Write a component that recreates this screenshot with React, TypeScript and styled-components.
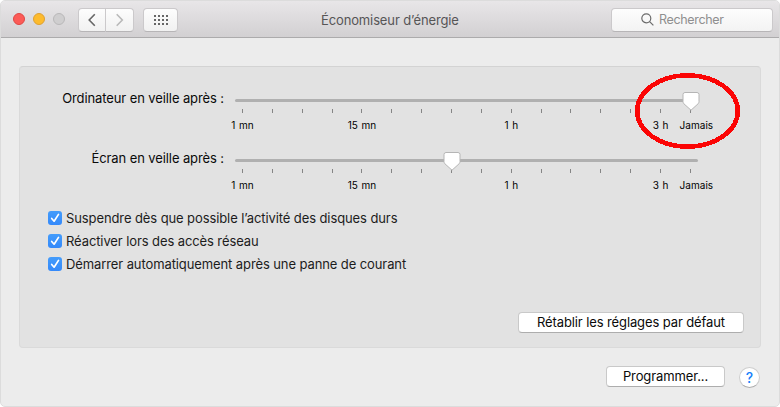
import React from "react";
import styled, { createGlobalStyle } from "styled-components";

const Global = createGlobalStyle`
  * { box-sizing: border-box; }
  body { margin: 0; background: #fff; font-family: Inter, "Liberation Sans", sans-serif; }
  button { font: inherit; padding: 0; margin: 0; }
`;

const Window = styled.div`
  position: relative;
  width: 780px;
  height: 407px;
  border: 1px solid #dcdcdc;
  border-radius: 5px;
  background: #ececec;
  overflow: hidden;
`;

const TitleBar = styled.header`
  height: 37px;
  display: flex;
  align-items: center;
  padding: 0 6px 0 12px;
  background: linear-gradient(#e8e6e8, #d2d0d2);
  border-bottom: 1px solid #acabac;
`;

const Lights = styled.div`
  display: flex;
  gap: 8px;
  width: 64px;
`;

const Light = styled.span<{ $fill: string; $edge: string }>`
  width: 12px;
  height: 12px;
  border-radius: 50%;
  background: ${(p) => p.$fill};
  border: 1px solid ${(p) => p.$edge};
`;

const ToolButton = styled.button<{ $width: number; $side?: "left" | "right" }>`
  width: ${(p) => p.$width}px;
  height: 24px;
  display: flex;
  align-items: center;
  justify-content: center;
  border: 1px solid #cbc9cb;
  border-bottom-color: #b7b5b7;
  border-left-width: ${(p) => (p.$side === "right" ? 0 : 1)}px;
  border-radius: ${(p) =>
    p.$side === "left" ? "4px 0 0 4px" : p.$side === "right" ? "0 4px 4px 0" : "4px"};
  background: linear-gradient(#fdfdfd, #f1f1f1);
`;

const NavGroup = styled.div`
  display: flex;
  margin: 1px 9px 0 1px;
`;

const GridSlot = styled.div`
  margin-top: 1px;
  width: 170px;
`;

const Title = styled.h1`
  margin: 2px 0 0;
  font-size: 13px;
  font-weight: 400;
  line-height: 18px;
  letter-spacing: -0.13px;
  color: #565556;
  white-space: nowrap;
  width: 290px;
  padding-left: 8px;
`;

const Search = styled.div`
  width: 162px;
  height: 24px;
  margin-top: 1px;
  margin-left: auto;
  display: flex;
  align-items: center;
  gap: 5px;
  padding-left: 29px;
  border: 1px solid #cbc9cb;
  border-bottom-color: #b7b5b7;
  border-radius: 4px;
  background: linear-gradient(#fdfdfd, #f3f3f3);
  color: #8f8f8f;
  font-size: 12.5px;
  letter-spacing: -0.33px;
`;

const Content = styled.main`
  padding: 28px 18px 0;
`;

const Panel = styled.section`
  height: 282px;
  border: 1px solid #dadada;
  border-top-color: #d3d3d3;
  border-radius: 4px;
  background: #e2e2e2;
  padding: 21px 16px 14px 27px;
  display: flex;
  flex-direction: column;
`;

const SliderRow = styled.div`
  display: flex;
  height: 60px;
`;

const SliderLabel = styled.div`
  width: 177px;
  text-align: right;
  font-size: 13px;
  line-height: 20px;
  letter-spacing: -0.1px;
  color: #0a0a0a;
  white-space: nowrap;
`;

const Slider = styled.div`
  position: relative;
  width: 463px;
  margin-left: 11px;
  padding-top: 11px;
`;

const Track = styled.div`
  height: 3px;
  border-radius: 2px;
  background: #b0b0b0;
`;

const Ticks = styled.div`
  display: flex;
  justify-content: space-between;
  width: 449px;
  margin: 7px 0 0 7px;
`;

const Tick = styled.div`
  width: 1px;
  display: flex;
  flex-direction: column;
  align-items: center;
  &::before {
    content: "";
    width: 1px;
    height: 4px;
    background: #858585;
  }
`;

const TickLabel = styled.span<{ $last: boolean }>`
  margin-top: 5px;
  padding-left: ${(p) => (p.$last ? 12 : 0)}px;
  font-size: 10px;
  line-height: 14px;
  letter-spacing: 0.03px;
  word-spacing: 0.8px;
  color: #000;
  white-space: nowrap;
`;

const Thumb = styled.svg<{ $step: number }>`
  position: absolute;
  top: 3px;
  left: ${(p) => (7.5 + (p.$step * 448) / 15 - 9).toFixed(2)}px;
`;

const Options = styled.div`
  display: flex;
  flex-direction: column;
  gap: 1px;
  margin: -1px 0 0 1px;
`;

const Option = styled.label`
  display: flex;
  align-items: center;
  gap: 4px;
  height: 22px;
  font-size: 13px;
  letter-spacing: -0.1px;
  color: #1c1c1c;
  white-space: nowrap;
`;

const Box = styled.span`
  width: 14px;
  height: 14px;
  border-radius: 3px;
  background: linear-gradient(#449cfb, #3489fa);
  display: flex;
`;

const PushButton = styled.button<{ $width: number }>`
  width: ${(p) => p.$width}px;
  height: 21px;
  border: 1px solid #c9c9c9;
  border-bottom-color: #adadad;
  border-radius: 4px;
  background: #fff;
  font-size: 13px;
  line-height: 18px;
  padding-bottom: 1px;
  letter-spacing: -0.11px;
  color: #0a0a0a;
  white-space: nowrap;
`;

const PanelFooter = styled.div`
  margin-top: auto;
  display: flex;
  justify-content: flex-end;
`;

const Footer = styled.footer`
  display: flex;
  justify-content: flex-end;
  gap: 14px;
  padding: 18px 1px 0 0;
`;

const Help = styled.button`
  width: 21px;
  height: 21px;
  margin-top: 1px;
  border-radius: 50%;
  border: 1px solid #cecece;
  border-bottom-color: #adadad;
  background: #fff;
  color: #1680fa;
  font-size: 14px;
  font-weight: 500;
  line-height: 19px;
`;

const Highlight = styled.svg`
  position: absolute;
  left: 633px;
  top: 70px;
`;

const LABELS: Record<number, string> = { 0: "1 mn", 4: "15 mn", 9: "1 h", 14: "3 h", 15: "Jamais" };
const STEPS = Array.from({ length: 16 }, (_, i) => i);
const OPTIONS = [
  "Suspendre dès que possible l’activité des disques durs",
  "Réactiver lors des accès réseau",
  "Démarrer automatiquement après une panne de courant",
];

function SleepSlider({ label, step }: { label: string; step: number }) {
  return (
    <SliderRow>
      <SliderLabel>{label}</SliderLabel>
      <Slider>
        <Track />
        <Ticks>
          {STEPS.map((i) => (
            <Tick key={i}>{LABELS[i] && <TickLabel $last={i === 15}>{LABELS[i]}</TickLabel>}</Tick>
          ))}
        </Ticks>
        <Thumb $step={step} width="18" height="21" viewBox="0 0 18 21">
          <path
            d="M3 1.500h12a2 2 0 0 1 2 2v7.200c0 .8-.3 1.400-.8 2L9 19.200l-7.200-6.500c-.5-.6-.8-1.200-.8-2V3.500a2 2 0 0 1 2-2z"
            fill="#fff"
            stroke="#b5b5b5"
          />
        </Thumb>
      </Slider>
    </SliderRow>
  );
}

export default function App() {
  return (
    <>
      <Global />
      <Window>
        <TitleBar>
          <Lights>
            <Light $fill="#fc5b57" $edge="#df4744" />
            <Light $fill="#fdbb2d" $edge="#dea032" />
            <Light $fill="#cfcecf" $edge="#b9b8b9" />
          </Lights>
          <NavGroup>
            <ToolButton $width={28} $side="left" aria-label="Précédent">
              <svg width="9" height="14" viewBox="0 0 9 14" fill="none" stroke="#666" strokeWidth="1.6">
                <path d="M6.800 1.300 1.200 7l5.600 5.700" />
              </svg>
            </ToolButton>
            <ToolButton $width={28} $side="right" aria-label="Suivant">
              <svg width="9" height="14" viewBox="0 0 9 14" fill="none" stroke="#b9b9b9" strokeWidth="1.6">
                <path d="M1.700 1.300 7.300 7l-5.600 5.700" />
              </svg>
            </ToolButton>
          </NavGroup>
          <GridSlot>
            <ToolButton $width={35} aria-label="Tout afficher">
              <svg width="14" height="10" viewBox="0 0 14 10" fill="#666" shapeRendering="crispEdges">
                {[0, 4, 8].map((y) =>
                  [0, 4, 8, 12].map((x) => <rect key={`${x}-${y}`} x={x} y={y} width="2" height="2" />)
                )}
              </svg>
            </ToolButton>
          </GridSlot>
          <Title>Économiseur d’énergie</Title>
          <Search>
            <svg width="13" height="13" viewBox="0 0 13 13" fill="none" stroke="#6c6c6c" strokeWidth="1.200">
              <circle cx="5.300" cy="5.300" r="4.500" />
              <path d="m8.600 8.600 3.800 3.800" />
            </svg>
            Rechercher
          </Search>
        </TitleBar>
        <Content>
          <Panel>
            <SleepSlider label="Ordinateur en veille après :" step={15} />
            <SleepSlider label="Écran en veille après :" step={7} />
            <Options>
              {OPTIONS.map((text) => (
                <Option key={text}>
                  <Box>
                    <svg width="14" height="14" viewBox="0 0 14 14" fill="none" stroke="#fff" strokeWidth="1.700" strokeLinecap="round" strokeLinejoin="round">
                      <path d="m3.700 7.500 2.400 2.700 4.400-6.800" />
                    </svg>
                  </Box>
                  {text}
                </Option>
              ))}
            </Options>
            <PanelFooter>
              <PushButton $width={226}>Rétablir les réglages par défaut</PushButton>
            </PanelFooter>
          </Panel>
          <Footer>
            <PushButton $width={119}>Programmer...</PushButton>
            <Help>?</Help>
          </Footer>
        </Content>
        <Highlight width="108" height="82" viewBox="0 0 108 82">
          <ellipse cx="53.500" cy="40" rx="50.300" ry="35.700" fill="none" stroke="#fb0505" strokeWidth="4.600" shapeRendering="crispEdges" />
        </Highlight>
      </Window>
    </>
  );
}
